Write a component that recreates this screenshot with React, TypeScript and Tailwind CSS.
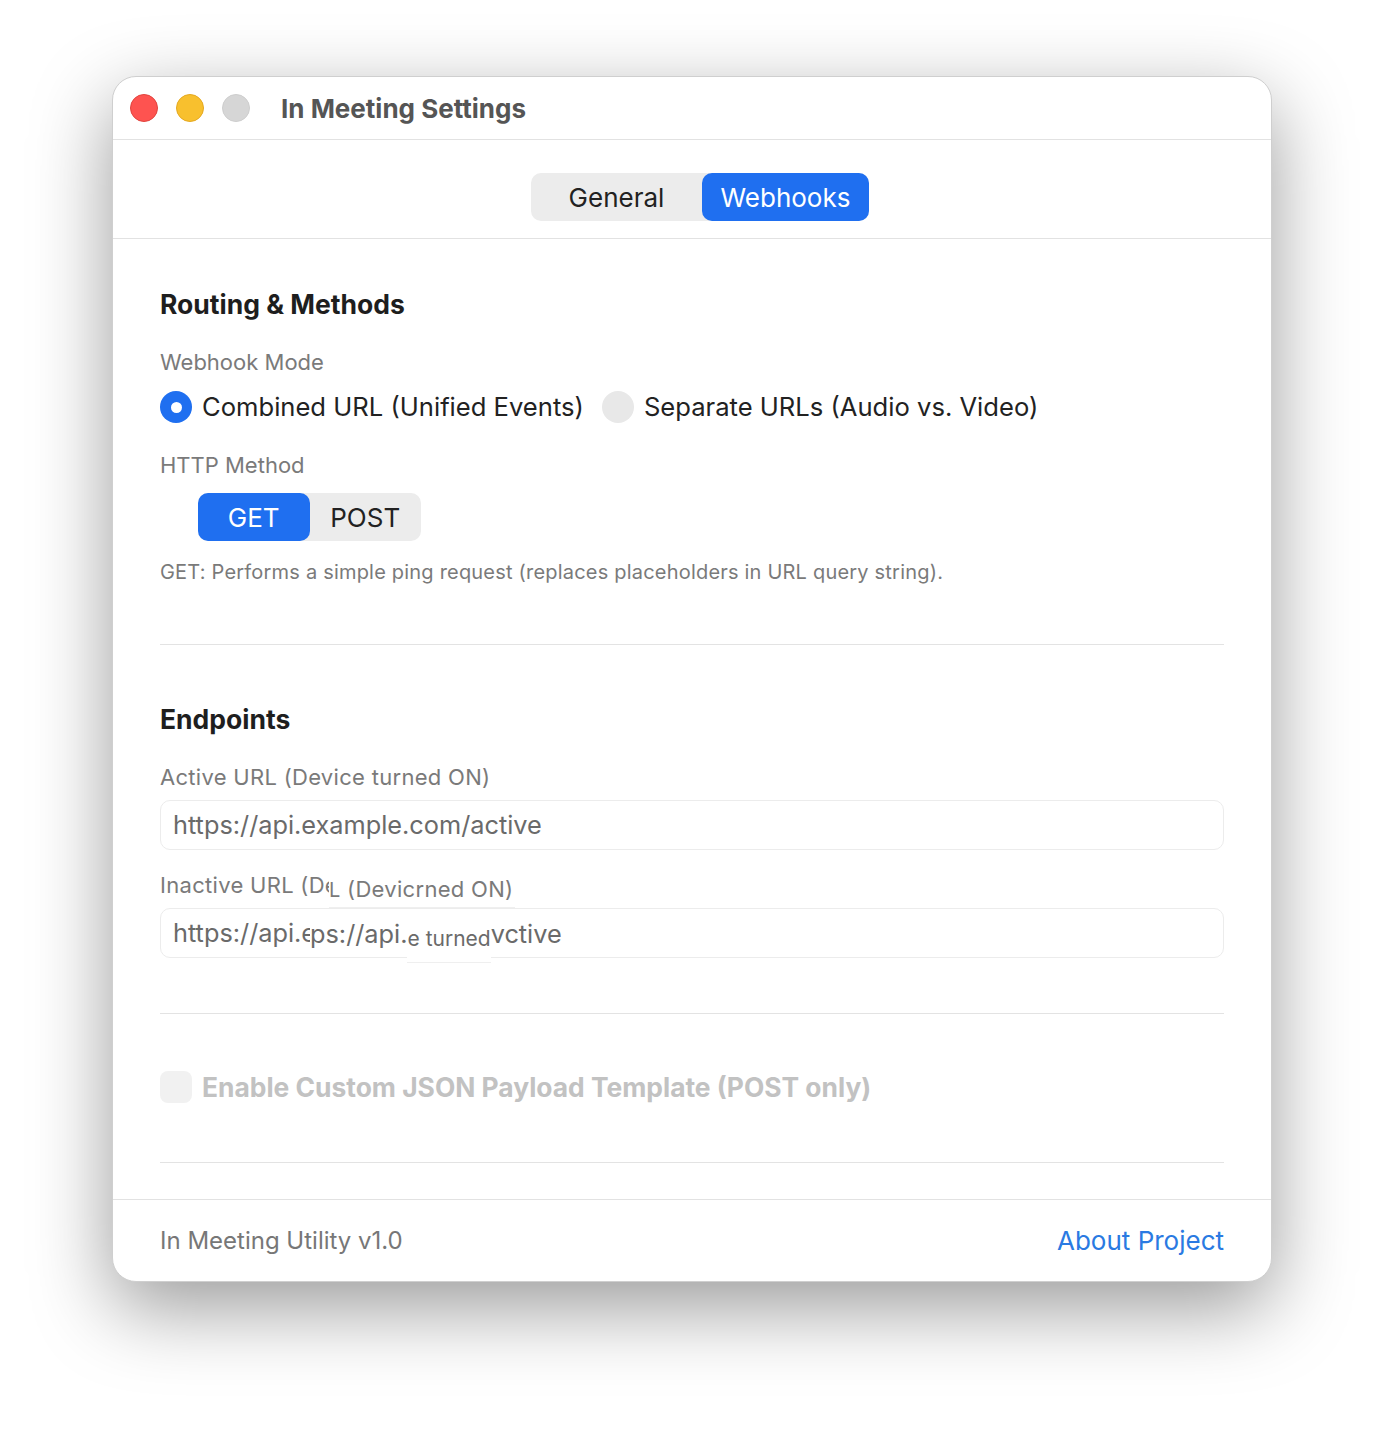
import { useState } from "react";

const font = { fontFamily: "Inter, 'Noto Sans', sans-serif" };

function Divider() {
  return <div className="h-px w-full bg-[#e3e3e3]" />;
}

function Radio({ checked, label }: { checked: boolean; label: string }) {
  return (
    <div className="flex items-center gap-[10px]">
      {checked ? (
        <span className="flex h-[32px] w-[32px] items-center justify-center rounded-full bg-[#1f6ff0]">
          <span className="h-[11px] w-[11px] rounded-full bg-white" />
        </span>
      ) : (
        <span className="h-[32px] w-[32px] rounded-full bg-[#e8e8e8]" />
      )}
      <span className="text-[25.6px] leading-[32px] text-[#222]">{label}</span>
    </div>
  );
}

export default function App() {
  const [tab, setTab] = useState<"general" | "webhooks">("webhooks");
  const [method, setMethod] = useState<"GET" | "POST">("GET");

  return (
    <div className="min-h-[1430px] w-full bg-white pl-[112px] pt-[76px]" style={font}>
      <div className="flex h-[1206px] w-[1160px] flex-col overflow-hidden rounded-[24px] border border-[#cfcfcf] bg-white shadow-[0_26px_80px_rgba(0,0,0,0.4)]">
        {/* Title bar */}
        <div className="flex h-[63px] shrink-0 items-center border-b border-[#e2e2e2] pl-[17px]">
          <div className="flex gap-[18px]">
            <span className="h-[28px] w-[28px] rounded-full border border-[#e0443e] bg-[#fe5350]" />
            <span className="h-[28px] w-[28px] rounded-full border border-[#e4a820] bg-[#f8c02e]" />
            <span className="h-[28px] w-[28px] rounded-full border border-[#cdcdcd] bg-[#d6d6d6]" />
          </div>
          <span className="ml-[31px] text-[26px] font-bold text-[#555]">In Meeting Settings</span>
        </div>

        {/* Tabs */}
        <div className="flex h-[99px] shrink-0 items-start justify-center border-b border-[#e2e2e2] pl-[16px] pt-[33px]">
          <div className="flex h-[48px] rounded-[10px] bg-[#ececec]">
            <button
              onClick={() => setTab("general")}
              className={`w-[171px] rounded-[10px] text-[26px] ${tab === "general" ? "bg-[#1f6ff0] text-white" : "text-[#222]"}`}
            >
              General
            </button>
            <button
              onClick={() => setTab("webhooks")}
              className={`w-[167px] rounded-[10px] text-[26px] ${tab === "webhooks" ? "bg-[#1f6ff0] text-white" : "text-[#222]"}`}
            >
              Webhooks
            </button>
          </div>
        </div>

        {/* Content */}
        <div className="flex flex-1 flex-col px-[47px] pt-[49px]">
          <h2 className="text-[26.5px] font-bold leading-[32px] text-[#1e1e1e]">Routing &amp; Methods</h2>
          <div className="mt-[28px] text-[22px] leading-[28px] text-[#7a7a7a]">Webhook Mode</div>
          <div className="mt-[15px] flex items-center gap-[18px]">
            <Radio checked label="Combined URL (Unified Events)" />
            <Radio checked={false} label="Separate URLs (Audio vs. Video)" />
          </div>
          <div className="mt-[28px] text-[22px] leading-[28px] text-[#7a7a7a]">HTTP Method</div>
          <div className="ml-[38px] mt-[14px] flex h-[48px] w-[223px] rounded-[10px] bg-[#ececec]">
            {(["GET", "POST"] as const).map((m) => (
              <button
                key={m}
                onClick={() => setMethod(m)}
                className={`flex-1 rounded-[10px] text-[26px] ${method === m ? "bg-[#1f6ff0] text-white" : "text-[#222]"}`}
              >
                {m}
              </button>
            ))}
          </div>
          <p className="mt-[18px] text-[20px] leading-[26px] tracking-[0.2px] text-[#7a7a7a]">
            GET: Performs a simple ping request (replaces placeholders in URL query string).
          </p>

          <div className="mt-[59px]">
            <Divider />
          </div>

          <h2 className="mt-[58px] text-[26.5px] font-bold leading-[32px] text-[#1e1e1e]">Endpoints</h2>
          <div className="mt-[28px] text-[22px] leading-[28px] tracking-[0.3px] text-[#7a7a7a]">Active URL (Device turned ON)</div>
          <div className="mt-[9px] flex h-[50px] items-center rounded-[10px] border border-[#ececec] px-[12px] text-[25.3px] text-[#6a6a6a]">
            https://api.example.com/active
          </div>

          {/* Inactive URL: glitch from the capture, drawn as overlapping patches */}
          <div className="relative mt-[21px] h-[28px] text-[22px] leading-[28px] tracking-[0.3px] text-[#7a7a7a]">
            <span>Inactive URL (De</span>
            <span className="absolute left-[169px] top-[4px] h-[33px] border-b border-[#efefef] bg-white pr-[2px] leading-[28px]">
              <span className="text-[20px]">L</span> (Devicrned ON)
            </span>
          </div>
          <div className="relative mt-[9px] flex h-[50px] items-center rounded-[10px] border border-[#ececec] px-[12px] text-[25.3px] text-[#6a6a6a]">
            <span>https://api.e</span>
            <span className="absolute left-[149px] top-0 flex h-[50px] items-center">
              <span className="bg-white">ps://api.</span>
              <span className="mt-[6px] flex h-[52px] items-center border-b border-[#efefef] bg-white pt-[4px] text-[21px]">e turned</span>
              <span>vctive</span>
            </span>
          </div>

          <div className="mt-[55px]">
            <Divider />
          </div>

          <div className="mt-[57px] flex items-center gap-[10px]">
            <span className="h-[32px] w-[32px] rounded-[8px] bg-[#f1f1f1]" />
            <span className="text-[26.4px] font-bold leading-[32px] text-[#c2c2c2]">
              Enable Custom JSON Payload Template (POST only)
            </span>
          </div>

          <div className="mt-[59px]">
            <Divider />
          </div>
        </div>

        {/* Footer */}
        <div className="flex h-[82px] shrink-0 items-center justify-between border-t border-[#e2e2e2] px-[47px]">
          <span className="text-[24px] text-[#777]">In Meeting Utility v1.0</span>
          <a className="text-[26px] text-[#2a7ae2]">About Project</a>
        </div>
      </div>
    </div>
  );
}
